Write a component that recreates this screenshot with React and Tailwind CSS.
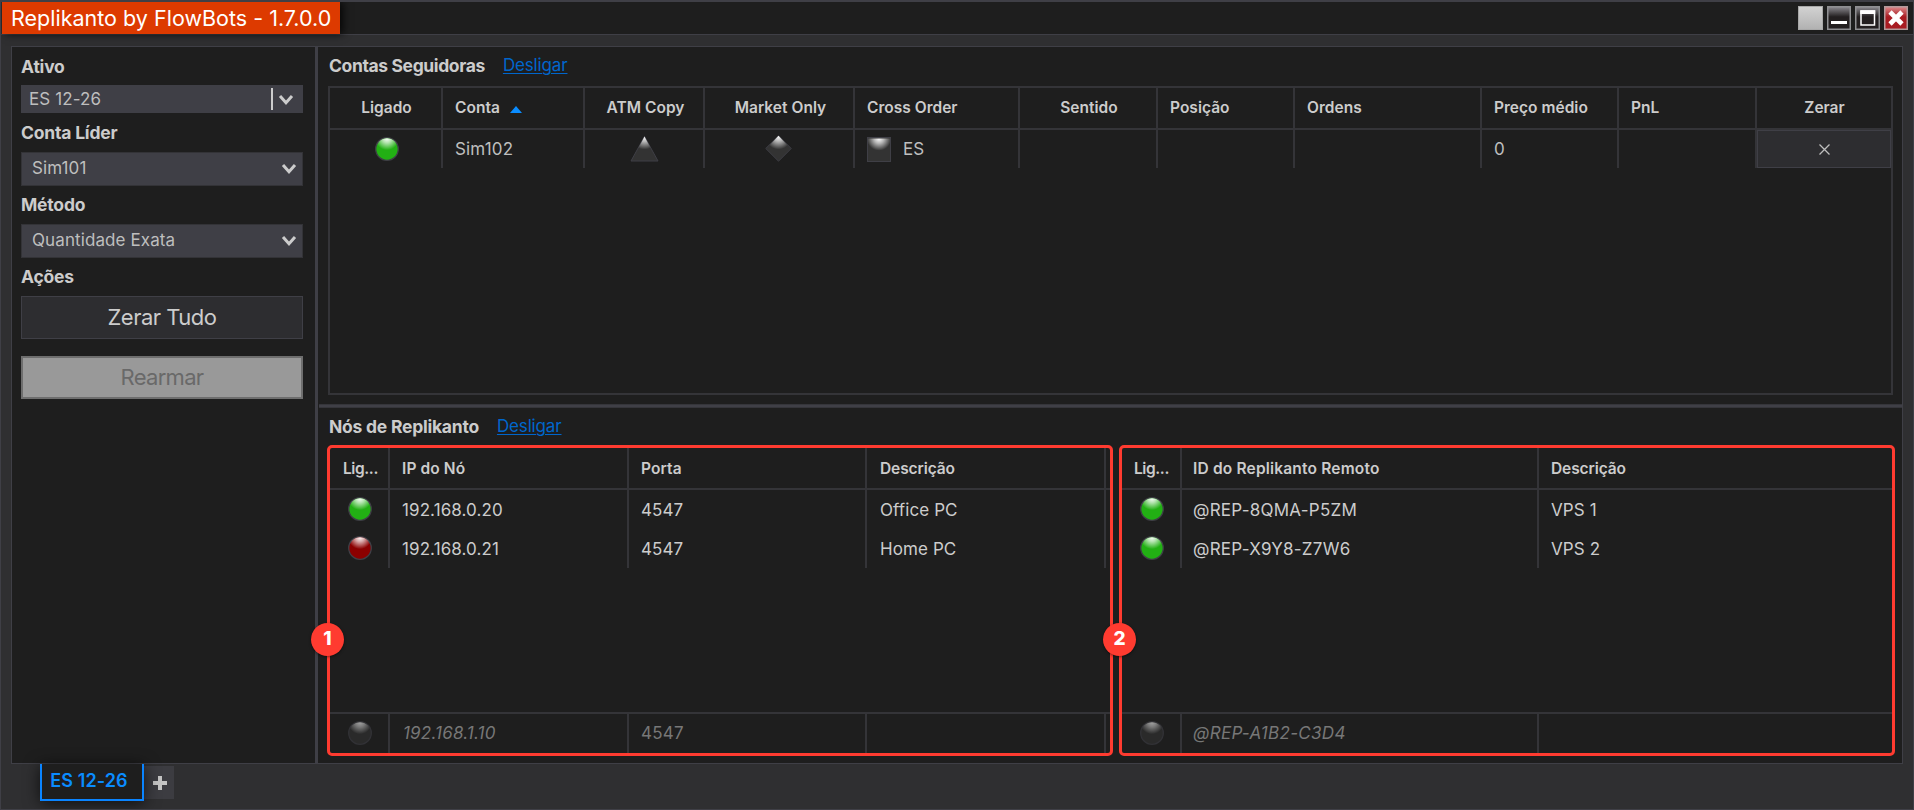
import React, { useState } from 'react';

const followerColumns = [
    { key: 'on', label: 'Ligado', width: 'w-[112px]', head: 'justify-center pl-px' },
    { key: 'account', label: 'Conta', width: 'w-[142px]', head: 'pl-[12px]', sorted: true },
    { key: 'atm', label: 'ATM Copy', width: 'w-[120px]', head: 'justify-center pl-[3px]' },
    { key: 'market', label: 'Market Only', width: 'w-[150px]', head: 'justify-center pl-[3px]' },
    { key: 'cross', label: 'Cross Order', width: 'w-[165px]', head: 'pl-[12px]' },
    { key: 'side', label: 'Sentido', width: 'w-[138px]', head: 'justify-center pl-[2px]' },
    { key: 'position', label: 'Posição', width: 'w-[137px]', head: 'pl-[12px]' },
    { key: 'orders', label: 'Ordens', width: 'w-[187px]', head: 'pl-[12px]' },
    { key: 'avg', label: 'Preço médio', width: 'w-[137px]', head: 'pl-[12px]' },
    { key: 'pnl', label: 'PnL', width: 'w-[138px]', head: 'pl-[12px]' },
    { key: 'flat', label: 'Zerar', width: 'flex-1', head: 'justify-center pl-px' },
];

const localNodes = [
    { id: 1, color: 'green', ip: '192.168.0.20', port: '4547', description: 'Office PC' },
    { id: 2, color: 'red', ip: '192.168.0.21', port: '4547', description: 'Home PC' },
];

const remoteNodes = [
    { id: 1, color: 'green', remoteId: '@REP-8QMA-P5ZM', description: 'VPS 1' },
    { id: 2, color: 'green', remoteId: '@REP-X9Y8-Z7W6', description: 'VPS 2' },
];

const Shine = ({ id }) => (
    <defs>
        <radialGradient id={id} cx="0.5" cy="0" r="0.55">
            <stop offset="0" stopColor="#fff" stopOpacity="1" />
            <stop offset="0.4" stopColor="#fff" stopOpacity="0.65" />
            <stop offset="1" stopColor="#fff" stopOpacity="0" />
        </radialGradient>
    </defs>
);

const Led = ({ color }) => {
    const fills = { green: '#22b014', red: '#8b0000', off: '#333333' };
    return (
        <svg width="24" height="24" viewBox="0 0 24 24" className={color === 'off' ? 'opacity-60' : ''}>
            <Shine id={`led-${color}`} />
            <circle cx="12" cy="12" r="11.3" fill={fills[color]} stroke="#3f3f46" strokeWidth="1.3" />
            <circle cx="12" cy="12" r="10.8" fill={`url(#led-${color})`} />
        </svg>
    );
};

const TriangleToggle = () => (
    <svg width="29" height="27" viewBox="0 0 29 27">
        <Shine id="tri" />
        <path d="M14.5 1.5 L28 26 H1 Z" fill="#333333" stroke="#3f3f46" />
        <path d="M14.5 1.5 L27 25 H2 Z" fill="url(#tri)" />
    </svg>
);

const DiamondToggle = () => (
    <svg width="27" height="27" viewBox="0 0 27 27">
        <Shine id="dia" />
        <path d="M13.5 0.8 L26.2 13.5 L13.5 26.2 L0.8 13.5 Z" fill="#333333" stroke="#3f3f46" />
        <path d="M13.5 0.8 L25.5 13.5 L13.5 25.5 L1.5 13.5 Z" fill="url(#dia)" />
    </svg>
);

const SquareToggle = () => (
    <svg width="24" height="25" viewBox="0 0 24 25">
        <Shine id="sq" />
        <rect x="0.5" y="0.5" width="23" height="24" fill="#333333" stroke="#3f3f46" />
        <rect x="1" y="1.5" width="22" height="22" fill="url(#sq)" />
    </svg>
);

const Chevron = () => (
    <svg width="16" height="12" viewBox="0 0 16 12" fill="none" stroke="#cccccc" strokeWidth="3">
        <path d="M2 2 L8 8.8 L14 2" />
    </svg>
);

const Label = ({ children }) => (
    <div className="text-[17.5px] font-bold leading-[20px] tracking-[-0.2px] text-[#cccccc]">{children}</div>
);

const Select = ({ value }) => (
    <button className="flex h-[34px] w-full items-center justify-between border border-[#333337] bg-[#3f3f46] pl-[10px] pr-[5px] text-[17px] tracking-[0.1px] text-[#bebebe]">
        <span>{value}</span>
        <Chevron />
    </button>
);

const Cell = ({ className = '', children }) => (
    <div className={`flex shrink-0 items-center border-r-2 border-[#343438] ${className}`}>{children}</div>
);

const Sidebar = () => (
    <aside className="flex w-[303px] shrink-0 flex-col px-[9px] pt-[10px]">
        <Label>Ativo</Label>
        <div className="mt-[8px] flex h-[28px] w-[282px] items-center bg-[#3f3f46] pl-[8px] text-[17px] tracking-[0.1px] text-[#bebebe]">
            <span className="flex-1 pt-px">ES 12-26</span>
            <span className="mr-[5px] h-[22px] w-[2px] bg-[#cccccc]" />
            <span className="mr-[9px] pt-px"><Chevron /></span>
        </div>
        <div className="mt-[10px] w-[282px]">
            <Label>Conta Líder</Label>
            <div className="mt-[9px]"><Select value="Sim101" /></div>
        </div>
        <div className="mt-[9px] w-[282px]">
            <Label>Método</Label>
            <div className="mt-[9px]"><Select value="Quantidade Exata" /></div>
        </div>
        <div className="mt-[9px] w-[282px]">
            <Label>Ações</Label>
            <button className="mt-[9px] block h-[43px] w-full border border-[#3f3f46] bg-[#2d2d30] text-[22px] tracking-[-0.5px] text-[#cccccc]">Zerar Tudo</button>
            <button className="mt-[17px] block h-[43px] w-full border-2 border-[#6e6e6e] bg-[#999999] text-[22px] tracking-[-0.7px] text-[#696969]">Rearmar</button>
        </div>
    </aside>
);

const SectionTitle = ({ title, spacing }) => (
    <div className="flex h-[20px] items-center text-[#cccccc]">
        <span className={`text-[17.5px] font-bold ${spacing}`}>{title}</span>
        <a href="#" className="ml-[18px] text-[17px] tracking-[-0.15px] text-[#0066cc] underline underline-offset-2">Desligar</a>
    </div>
);

const Followers = () => (
    <section className="h-[357px] pl-[11px] pt-[9px]">
        <SectionTitle title="Contas Seguidoras" spacing="tracking-[-0.38px]" />
        <div className="-ml-px mt-[10px] h-[309px] w-[1565px] border-2 border-[#343438]">
            <div className="flex h-[42px] border-b-2 border-[#343438] pl-px text-[15.5px] font-semibold tracking-[0.02px] text-[#cccccc]">
                {followerColumns.map(col => (
                    <div key={col.key} className={`flex items-center ${col.width} ${col.head} ${col.key === 'flat' ? '' : 'border-r-2 border-[#343438]'}`}>
                        {col.label}
                        {col.sorted && (
                            <svg width="12" height="7" viewBox="0 0 12 7" className="ml-[10px] mt-[3px]">
                                <path d="M6 0 L12 7 H0 Z" fill="#0a8cff" />
                            </svg>
                        )}
                    </div>
                ))}
            </div>
            <div className="flex h-[38px] pl-px text-[17px] tracking-[0.15px] text-[#bebebe]">
                <Cell className="w-[112px] justify-center pl-[2px]"><Led color="green" /></Cell>
                <Cell className="w-[142px] pl-[12px] pt-[2px]">Sim102</Cell>
                <Cell className="w-[120px] justify-center pb-px"><TriangleToggle /></Cell>
                <Cell className="w-[150px] justify-center pb-px pr-[2px]"><DiamondToggle /></Cell>
                <Cell className="w-[165px] gap-[12px] pl-[12px]"><SquareToggle /><span className="pt-[2px]">ES</span></Cell>
                <Cell className="w-[138px]" />
                <Cell className="w-[137px]" />
                <Cell className="w-[187px]" />
                <Cell className="w-[137px] pl-[12px] pt-[2px]">0</Cell>
                <Cell className="w-[138px]" />
                <button className="flex flex-1 items-center justify-center border border-[#3f3f46] bg-[#2d2d30]">
                    <svg width="11" height="11" viewBox="0 0 11 11" stroke="#bebebe" strokeWidth="1.3">
                        <path d="M0.5 0.5 L10.5 10.5 M10.5 0.5 L0.5 10.5" />
                    </svg>
                </button>
            </div>
        </div>
    </section>
);

const Badge = ({ children }) => (
    <span className="absolute -left-[19px] top-[175px] flex h-[33px] w-[33px] items-center justify-center rounded-full bg-[#ff3b30] text-[19px] font-extrabold text-white shadow-[0_1px_3px_rgba(0,0,0,0.5)]">{children}</span>
);

const LocalNodes = () => (
    <div className="relative flex h-[311px] w-[786px] flex-col rounded-[5px] border-[3px] border-[#ff3b30]">
        <div className="flex h-[42px] border-b-2 border-[#343438] text-[15.5px] font-semibold tracking-[0.1px] text-[#cccccc]">
            <Cell className="w-[60px] pl-[13px] pt-px tracking-[-0.4px]">Lig...</Cell>
            <Cell className="w-[239px] pl-[12px] pt-px">IP do Nó</Cell>
            <Cell className="w-[238px] pl-[12px] pt-px">Porta</Cell>
            <Cell className="w-[239px] pl-[13px] pt-px tracking-[-0.1px]">Descrição</Cell>
        </div>
        {localNodes.map(node => (
            <div key={node.id} className="flex h-[39px] text-[17px] tracking-[0.1px] text-[#cccccc]">
                <Cell className="w-[60px] justify-center pb-px pl-[2px]"><Led color={node.color} /></Cell>
                <Cell className="w-[239px] pl-[12px] pt-[2px]">{node.ip}</Cell>
                <Cell className="w-[238px] pl-[12px] pt-[2px]">{node.port}</Cell>
                <Cell className="w-[239px] pl-[13px] pt-[2px]">{node.description}</Cell>
            </div>
        ))}
        <div className="mt-auto flex h-[41px] border-t-2 border-[#343438] text-[17px] tracking-[0.2px] text-[#777777]">
            <Cell className="w-[60px] justify-center border-[#2a2a2c] pb-px pl-[2px]"><Led color="off" /></Cell>
            <Cell className="w-[239px] border-[#2a2a2c] pl-[13px] italic">192.168.1.10</Cell>
            <Cell className="w-[238px] border-[#2a2a2c] pl-[12px]">4547</Cell>
            <Cell className="w-[239px] border-[#2a2a2c]" />
        </div>
        <Badge>1</Badge>
    </div>
);

const RemoteNodes = () => (
    <div className="relative flex h-[311px] w-[776px] flex-col rounded-[5px] border-[3px] border-[#ff3b30]">
        <div className="flex h-[42px] border-b-2 border-[#343438] text-[15.5px] font-semibold tracking-[0.18px] text-[#cccccc]">
            <Cell className="w-[60px] pl-[12px] pt-px tracking-[-0.4px]">Lig...</Cell>
            <Cell className="w-[357px] pl-[11px] pt-px">ID do Replikanto Remoto</Cell>
            <div className="flex items-center pl-[12px] pt-px tracking-[-0.1px]">Descrição</div>
        </div>
        {remoteNodes.map(node => (
            <div key={node.id} className="flex h-[39px] text-[17px] tracking-[0.25px] text-[#cccccc]">
                <Cell className="w-[60px] justify-center pb-px pl-[2px]"><Led color={node.color} /></Cell>
                <Cell className="w-[357px] pl-[11px] pt-[2px]">{node.remoteId}</Cell>
                <div className="flex items-center pl-[12px] pt-[2px] tracking-[0.1px]">{node.description}</div>
            </div>
        ))}
        <div className="mt-auto flex h-[41px] border-t-2 border-[#343438] text-[17px] tracking-[0.3px] text-[#777777]">
            <Cell className="w-[60px] justify-center border-[#2a2a2c] pb-px pl-[2px]"><Led color="off" /></Cell>
            <Cell className="w-[357px] border-[#2a2a2c] pl-[11px] italic">@REP-A1B2-C3D4</Cell>
        </div>
        <Badge>2</Badge>
    </div>
);

const TitleBar = () => (
    <header className="flex h-[32px] items-center justify-between bg-[#1e1e1e] pr-[5px]">
        <h1 className="flex h-full w-[338px] items-center whitespace-nowrap bg-[#dd3a00] pl-[9px] text-[21.5px] tracking-[0.01px] text-white shadow-[3px_0_8px_rgba(0,0,0,0.8)]">
            Replikanto by FlowBots - 1.7.0.0
        </h1>
        <div className="flex gap-[4px]">
            <span className="h-[24px] w-[25px] border border-[#a8a8a8] bg-linear-to-b from-[#d2d2d2] to-[#b2b2b2]" />
            <svg width="24" height="24" viewBox="0 0 24 24">
                <defs>
                    <linearGradient id="dark" x1="0" y1="0" x2="0" y2="1">
                        <stop offset="0" stopColor="#8c8a90" />
                        <stop offset="0.45" stopColor="#231f20" />
                        <stop offset="1" stopColor="#231f20" />
                    </linearGradient>
                </defs>
                <rect x="0.75" y="0.75" width="22.5" height="22.5" fill="url(#dark)" stroke="#8f8f92" strokeWidth="1.5" />
                <rect x="4" y="15" width="16" height="3" fill="#fff" />
            </svg>
            <svg width="25" height="24" viewBox="0 0 25 24">
                <rect x="0.75" y="0.75" width="23.5" height="22.5" fill="url(#dark)" stroke="#8f8f92" strokeWidth="1.5" />
                <rect x="6" y="5" width="13.5" height="14" fill="none" stroke="#fff" strokeWidth="1.5" />
                <rect x="5.3" y="4.3" width="14.9" height="3.7" fill="#fff" />
            </svg>
            <svg width="24" height="24" viewBox="0 0 24 24">
                <defs>
                    <linearGradient id="close" x1="0" y1="0" x2="0" y2="1">
                        <stop offset="0" stopColor="#dd8a8c" />
                        <stop offset="0.45" stopColor="#a81c22" />
                        <stop offset="1" stopColor="#a81c22" />
                    </linearGradient>
                </defs>
                <rect x="0.75" y="0.75" width="22.5" height="22.5" fill="url(#close)" stroke="#b39a9b" strokeWidth="1.5" />
                <path d="M6 6 L18 18 M18 6 L6 18" stroke="#fff" strokeWidth="4.6" />
            </svg>
        </div>
    </header>
);

export default function App() {
    const [tabs] = useState(['ES 12-26']);

    return (
        <div className="h-[810px] w-[1914px] overflow-hidden border-x border-b border-t-2 border-[#3f3f46] bg-[#2f2f31] font-['Inter',sans-serif]">
            <div className="pl-px"><TitleBar /></div>
            <div className="h-px bg-[#3f3f46]" />
            <main className="ml-[10px] mt-[11px] flex h-[718px] w-[1892px] border border-[#3f3f46] bg-[#1e1e1e]">
                <Sidebar />
                <div className="w-[3px] shrink-0 bg-[#3f3f46]" />
                <div className="flex-1">
                    <Followers />
                    <div className="ml-px h-[4px] border-y border-[#35353a] bg-[#3f3f46]" />
                    <section className="pl-[11px] pt-[9px]">
                        <SectionTitle title="Nós de Replikanto" spacing="tracking-[-0.24px]" />
                        <div className="-ml-[2px] mt-[8px] flex gap-[6px]">
                            <LocalNodes />
                            <RemoteNodes />
                        </div>
                    </section>
                </div>
            </main>
            <footer className="flex pl-[39px]">
                {tabs.map(tab => (
                    <button key={tab} className="relative h-[37px] w-[104px] border-2 border-t-0 border-[#0a84ff] bg-[#1e1e1e] pb-[2px] pr-[6px] text-[18px] font-semibold tracking-[0.1px] text-[#0a8cff] shadow-[0_2px_16px_rgba(0,0,0,0.7)]">
                        {tab}
                    </button>
                ))}
                <button className="mt-[2px] flex h-[33px] w-[30px] items-center justify-center bg-[#3c3c41] pl-px pt-px">
                    <svg width="14" height="14" viewBox="0 0 14 14" stroke="#c4c4c4" strokeWidth="4">
                        <path d="M7 0 V14 M0 7 H14" />
                    </svg>
                </button>
            </footer>
        </div>
    );
}
